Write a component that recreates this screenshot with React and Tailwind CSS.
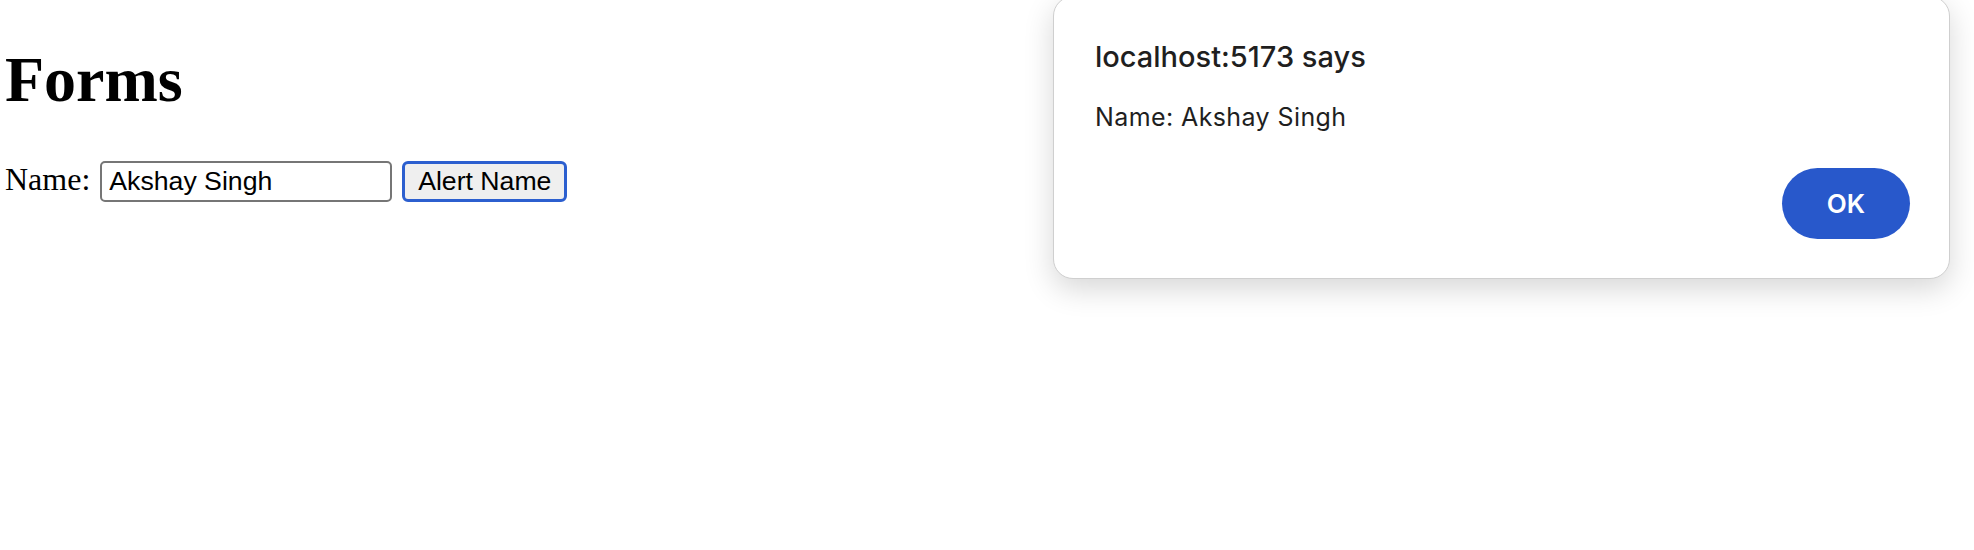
export default function App() {
  return (
    <div className="relative w-full h-[550px] bg-white overflow-hidden">
      <div className="pl-[5px] pt-[48px] text-black" style={{ fontFamily: '"Liberation Serif", "Times New Roman", serif' }}>
        <h1 className="text-[64px] leading-[64px] font-bold m-0">Forms</h1>
        <div className="mt-[49px] flex items-start h-[41px]">
          <span className="text-[32px] leading-[37px]">Name:</span>
          <input
            readOnly
            value="Akshay Singh"
            className="ml-[10px] w-[292px] h-[41px] border-2 border-[#767676] rounded-[5px] pl-[7px] text-[26.67px] text-black bg-white outline-none"
            style={{ fontFamily: '"Liberation Sans", Arial, sans-serif' }}
          />
          <button
            className="ml-[10px] w-[165px] h-[41px] border-[3px] border-[#2c5fcf] rounded-[6px] bg-[#efefef] text-[26.67px] text-black leading-none flex items-center justify-center"
            style={{ fontFamily: '"Liberation Sans", Arial, sans-serif' }}
          >
            Alert Name
          </button>
        </div>
      </div>

      <div
        className="absolute left-[1053px] top-[-4px] w-[897px] h-[283px] rounded-[20px] bg-white border border-[#cfcfcf] shadow-[0_10px_30px_rgba(0,0,0,0.16)] flex flex-col pl-[41px] pr-[39px] pt-[45px] pb-[39px] text-[#1f1f1f]"
        style={{ fontFamily: 'Inter, "Noto Sans", sans-serif' }}
      >
        <div className="text-[29px] leading-[30px] font-medium">localhost:5173 says</div>
        <div className="mt-[33px] text-[25px] leading-[24px] tracking-[0.4px]">Name: Akshay Singh</div>
        <div className="mt-auto flex justify-end">
          <button className="w-[128px] h-[71px] rounded-full bg-[#2858cb] text-white text-[26px] font-semibold flex items-center justify-center">
            OK
          </button>
        </div>
      </div>
    </div>
  );
}
